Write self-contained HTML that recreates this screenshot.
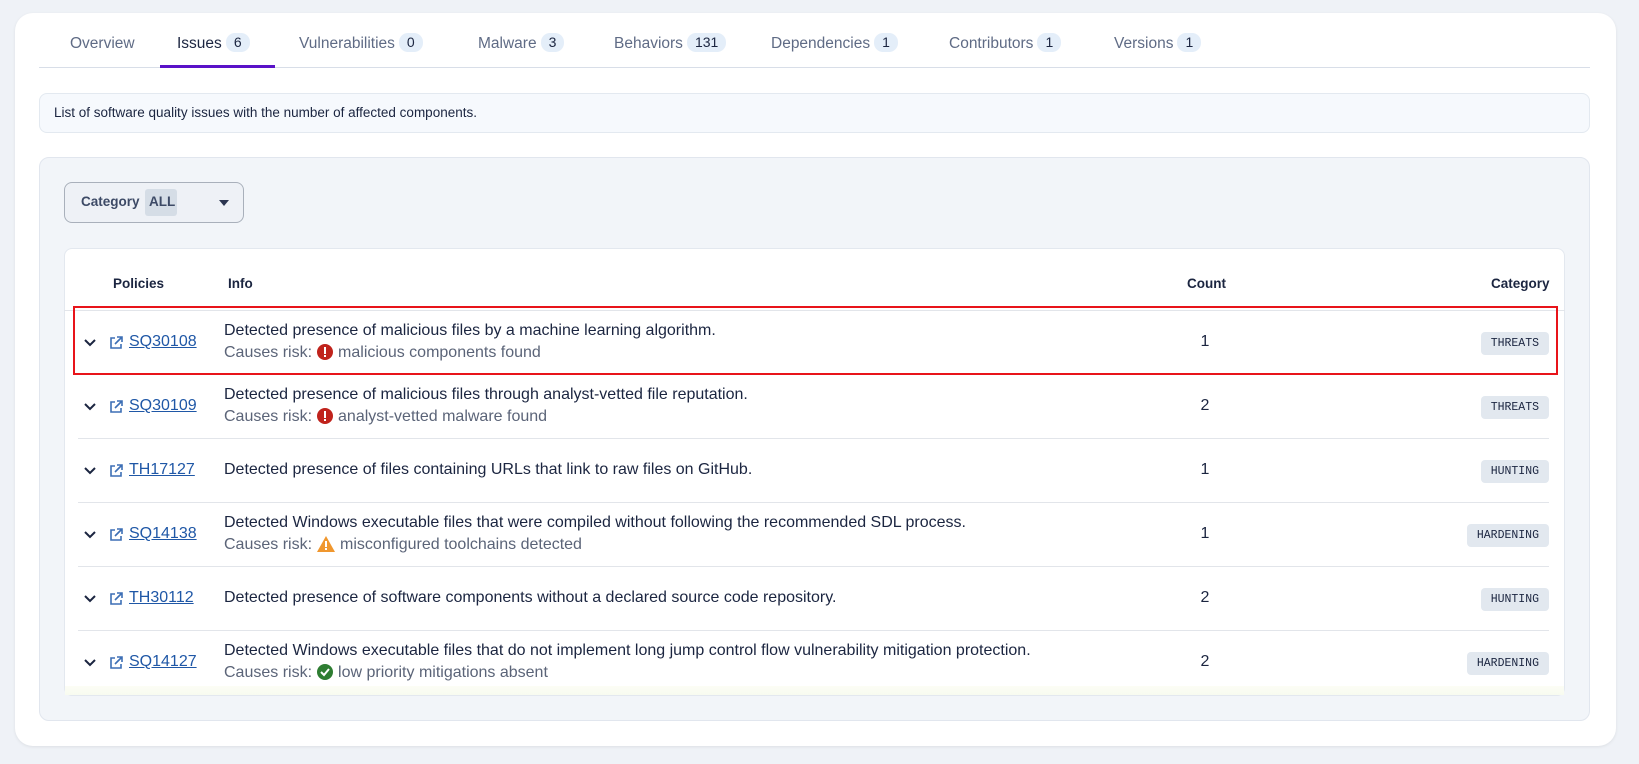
<!DOCTYPE html>
<html><head><meta charset="utf-8"><style>
*{box-sizing:border-box;margin:0;padding:0}
body{width:1639px;height:764px;background:#eff2f7;font-family:"Liberation Sans",sans-serif;position:relative;overflow:hidden;color:#1b2540}
.card{position:absolute;left:15px;top:13px;width:1601px;height:733px;background:#fff;border-radius:18px;box-shadow:0 1px 3px rgba(0,0,0,.08)}
.abs{position:absolute}
.tab{position:absolute;top:33px;height:22px;line-height:22px;font-size:15.5px;color:#5f6b85;white-space:nowrap}
.tab.act{color:#1b2540}
.badge{display:inline-block;background:#e4eef9;color:#1b2540;border-radius:9px;padding:0 8px;height:19px;line-height:19px;font-size:14px;margin-left:4px;vertical-align:1px}
.tabline{left:39px;top:67px;width:1551px;height:1px;background:#d8dee8}
.under{left:160px;top:65px;width:115px;height:3px;background:#5a12c8}
.info{left:39px;top:93px;width:1551px;height:40px;background:#f6f9fd;border:1px solid #e3e9f0;border-radius:8px;font-size:13.5px;padding:11px 0 0 14px;color:#1b2540}
.panel{left:39px;top:157px;width:1551px;height:564px;background:#f2f5f9;border:1px solid #e1e6ee;border-radius:10px}
.sel{left:64px;top:182px;width:180px;height:41px;border:1px solid #a9b0bb;border-radius:8px;background:#eef1f6}
.tbl{left:64px;top:248px;width:1501px;height:448px;background:#fff;border:1px solid #e3e8ef;border-radius:8px;overflow:hidden}
.th{position:absolute;top:276px;font-size:13.5px;font-weight:bold;color:#1b2540}
.row{position:absolute;left:78px;width:1471px;height:64px;border-bottom:1px solid #e2e5ea}
.chev{position:absolute;left:6px;top:28px}
.ext{position:absolute;left:31px;top:25px}
.id{position:absolute;left:51px;font-size:16px;color:#1f57a6;text-decoration:underline;top:22px}
.t1{position:absolute;left:146px;font-size:16px;line-height:20px;color:#1b2540;white-space:nowrap}
.t2{position:absolute;left:146px;font-size:16px;line-height:20px;color:#5b6478;white-space:nowrap}
.cnt{position:absolute;left:1122px;width:10px;text-align:center;top:22px;font-size:16px}
.tag{position:absolute;right:0;top:21px;height:23px;line-height:23px;padding:0 10px;background:#e2e8ef;border-radius:4px;font-family:"Liberation Mono",monospace;font-size:11.5px;color:#1b2540}
.ic{display:inline-block;vertical-align:-3px;margin:0 5px 0 5px}
</style></head><body>
<div class="card"></div>
<div class="tab" style="left:70px">Overview</div>
<div class="tab act" style="left:177px">Issues<span class="badge">6</span></div>
<div class="tab" style="left:299px">Vulnerabilities<span class="badge">0</span></div>
<div class="tab" style="left:478px">Malware<span class="badge">3</span></div>
<div class="tab" style="left:614px">Behaviors<span class="badge">131</span></div>
<div class="tab" style="left:771px">Dependencies<span class="badge">1</span></div>
<div class="tab" style="left:949px">Contributors<span class="badge">1</span></div>
<div class="tab" style="left:1114px">Versions<span class="badge">1</span></div>
<div class="abs tabline"></div><div class="abs under"></div>
<div class="abs info">List of software quality issues with the number of affected components.</div>
<div class="abs panel"></div>
<div class="abs sel"><span class="abs" style="left:16px;top:11px;font-size:13.5px;font-weight:bold;color:#3d4a66">Category</span><span class="abs" style="left:80px;top:6px;width:32px;height:27px;background:#d5dde6;border-radius:3px;font-size:13.5px;font-weight:bold;color:#3d4a66;padding:5px 0 0 4px">ALL</span><svg class="abs" style="left:154px;top:17px" width="10" height="6"><path d="M0 0H10L5 6Z" fill="#2b3550"/></svg></div>
<div class="abs tbl"></div>
<div class="th" style="left:113px">Policies</div>
<div class="th" style="left:228px">Info</div>
<div class="th" style="left:1187px">Count</div>
<div class="th" style="left:1491px">Category</div>
<div class="abs" style="left:64px;top:310px;width:1501px;height:1px;background:#e2e5ea"></div>

<div class="row" style="top:311px">
<svg class="chev" width="12" height="8"><path d="M1 1L6 6L11 1" stroke="#1b2540" stroke-width="2" fill="none"/></svg>
<svg class="ext" width="14" height="14" viewBox="0 0 14 14"><path d="M6 2H2V12H12V8M8 1H13V6M13 1L6 8" stroke="#3d6fb5" stroke-width="1.6" fill="none"/></svg>
<span class="id">SQ30108</span>
<span class="t1" style="top:10px">Detected presence of malicious files by a machine learning algorithm.</span>
<span class="t2" style="top:32px">Causes risk:<svg class="ic" width="16" height="16"><circle cx="8" cy="8" r="8" fill="#c0231c"/><rect x="7" y="3" width="2" height="7" fill="#fff"/><rect x="7" y="11" width="2" height="2" fill="#fff"/></svg>malicious components found</span>
<span class="cnt">1</span><span class="tag">THREATS</span></div>

<div class="row" style="top:375px">
<svg class="chev" width="12" height="8"><path d="M1 1L6 6L11 1" stroke="#1b2540" stroke-width="2" fill="none"/></svg>
<svg class="ext" width="14" height="14" viewBox="0 0 14 14"><path d="M6 2H2V12H12V8M8 1H13V6M13 1L6 8" stroke="#3d6fb5" stroke-width="1.6" fill="none"/></svg>
<span class="id">SQ30109</span>
<span class="t1" style="top:10px">Detected presence of malicious files through analyst-vetted file reputation.</span>
<span class="t2" style="top:32px">Causes risk:<svg class="ic" width="16" height="16"><circle cx="8" cy="8" r="8" fill="#c0231c"/><rect x="7" y="3" width="2" height="7" fill="#fff"/><rect x="7" y="11" width="2" height="2" fill="#fff"/></svg>analyst-vetted malware found</span>
<span class="cnt">2</span><span class="tag">THREATS</span></div>

<div class="row" style="top:439px">
<svg class="chev" width="12" height="8"><path d="M1 1L6 6L11 1" stroke="#1b2540" stroke-width="2" fill="none"/></svg>
<svg class="ext" width="14" height="14" viewBox="0 0 14 14"><path d="M6 2H2V12H12V8M8 1H13V6M13 1L6 8" stroke="#3d6fb5" stroke-width="1.6" fill="none"/></svg>
<span class="id">TH17127</span>
<span class="t1" style="top:21px">Detected presence of files containing URLs that link to raw files on GitHub.</span>
<span class="cnt">1</span><span class="tag">HUNTING</span></div>

<div class="row" style="top:503px">
<svg class="chev" width="12" height="8"><path d="M1 1L6 6L11 1" stroke="#1b2540" stroke-width="2" fill="none"/></svg>
<svg class="ext" width="14" height="14" viewBox="0 0 14 14"><path d="M6 2H2V12H12V8M8 1H13V6M13 1L6 8" stroke="#3d6fb5" stroke-width="1.6" fill="none"/></svg>
<span class="id">SQ14138</span>
<span class="t1" style="top:10px">Detected Windows executable files that were compiled without following the recommended SDL process.</span>
<span class="t2" style="top:32px">Causes risk:<svg class="ic" width="18" height="16"><path d="M9 0L18 16H0Z" fill="#f0972e"/><rect x="8" y="5" width="2" height="6" fill="#fff"/><rect x="8" y="12" width="2" height="2" fill="#fff"/></svg>misconfigured toolchains detected</span>
<span class="cnt">1</span><span class="tag">HARDENING</span></div>

<div class="row" style="top:567px">
<svg class="chev" width="12" height="8"><path d="M1 1L6 6L11 1" stroke="#1b2540" stroke-width="2" fill="none"/></svg>
<svg class="ext" width="14" height="14" viewBox="0 0 14 14"><path d="M6 2H2V12H12V8M8 1H13V6M13 1L6 8" stroke="#3d6fb5" stroke-width="1.6" fill="none"/></svg>
<span class="id">TH30112</span>
<span class="t1" style="top:21px">Detected presence of software components without a declared source code repository.</span>
<span class="cnt">2</span><span class="tag">HUNTING</span></div>

<div class="row" style="top:631px;border-bottom:none;height:64px;overflow:hidden">
<svg class="chev" width="12" height="8"><path d="M1 1L6 6L11 1" stroke="#1b2540" stroke-width="2" fill="none"/></svg>
<svg class="ext" width="14" height="14" viewBox="0 0 14 14"><path d="M6 2H2V12H12V8M8 1H13V6M13 1L6 8" stroke="#3d6fb5" stroke-width="1.6" fill="none"/></svg>
<span class="id">SQ14127</span>
<span class="t1" style="top:10px">Detected Windows executable files that do not implement long jump control flow vulnerability mitigation protection.</span>
<span class="t2" style="top:32px">Causes risk:<svg class="ic" width="16" height="16"><circle cx="8" cy="8" r="8" fill="#2e7d32"/><path d="M4 8L7 11L12 5" stroke="#fff" stroke-width="2" fill="none"/></svg>low priority mitigations absent</span>
<span class="cnt">2</span><span class="tag">HARDENING</span></div>
<div class="abs" style="left:65px;top:686px;width:1499px;height:9px;background:linear-gradient(#fcfdf5,#f8fbf0)"></div>

<div class="abs" style="left:73px;top:306px;width:1485px;height:69px;border:2px solid #e8141a"></div>
</body></html>
